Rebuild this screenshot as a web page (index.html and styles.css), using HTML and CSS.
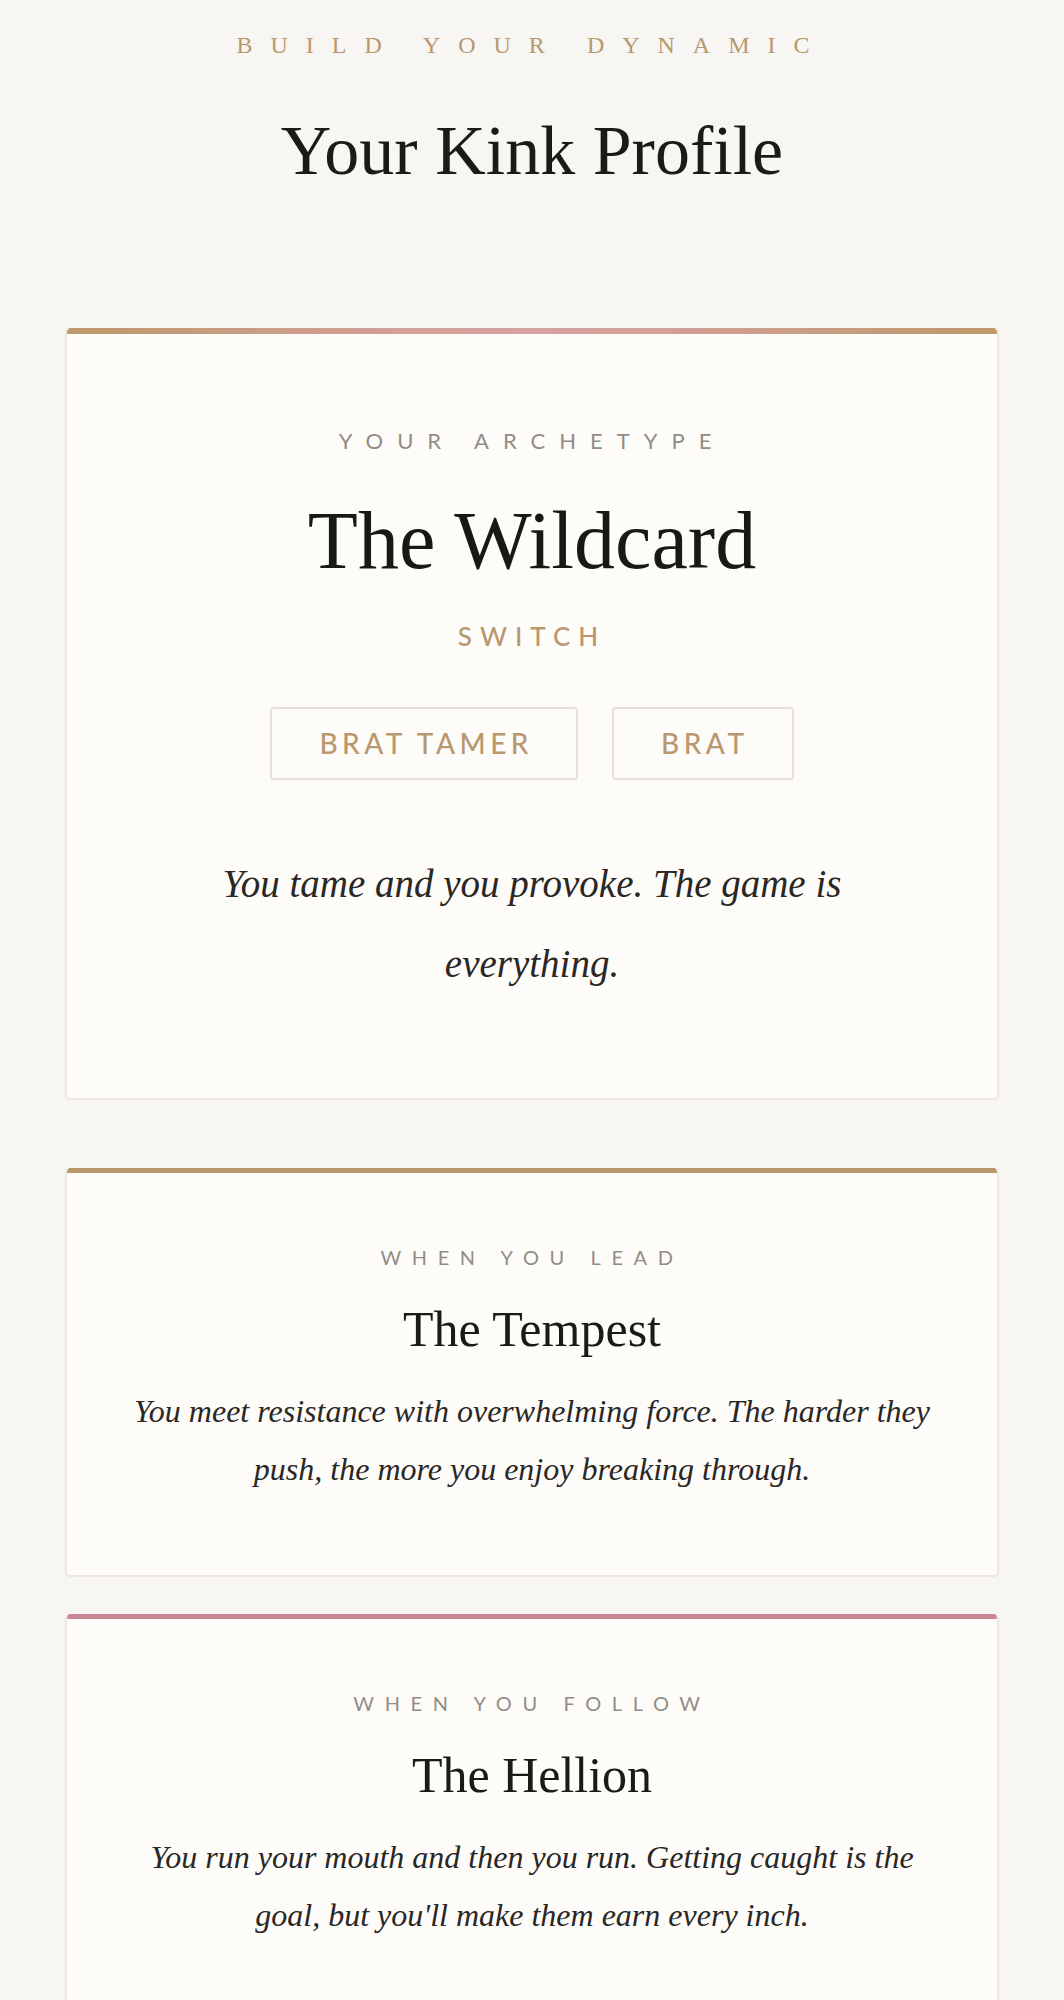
FILE: index.html
```html
<!DOCTYPE html>
<html lang="en">
<head>
<meta charset="utf-8">
<title>Your Kink Profile</title>
<link rel="stylesheet" href="styles.css">
</head>
<body>
<main class="page">
  <header class="page-head">
    <p class="eyebrow">Build your dynamic</p>
    <h1 class="page-title">Your Kink Profile</h1>
  </header>

  <section class="card card-archetype">
    <div class="bar bar-gradient"></div>
    <div class="card-body archetype-body">
      <p class="label label-lg">Your archetype</p>
      <h2 class="archetype-name">The Wildcard</h2>
      <p class="role">Switch</p>
      <div class="pills">
        <span class="pill">Brat Tamer</span>
        <span class="pill">Brat</span>
      </div>
      <p class="archetype-desc">You tame and you provoke. The game is everything.</p>
    </div>
  </section>

  <div class="sides">
    <section class="card">
      <div class="bar bar-gold"></div>
      <div class="card-body side-body">
        <p class="label">When you lead</p>
        <h3 class="side-name">The Tempest</h3>
        <p class="side-desc">You meet resistance with overwhelming force. The harder they push, the more you enjoy breaking through.</p>
      </div>
    </section>

    <section class="card">
      <div class="bar bar-rose"></div>
      <div class="card-body side-body">
        <p class="label">When you follow</p>
        <h3 class="side-name">The Hellion</h3>
        <p class="side-desc">You run your mouth and then you run. Getting caught is the goal, but you'll make them earn every inch.</p>
      </div>
    </section>
  </div>
</main>
</body>
</html>
```

FILE: styles.css
```css
* { box-sizing: border-box; }

html, body {
  margin: 0;
  padding: 0;
  background: #f8f6f2;
}

body {
  font-family: "Liberation Serif", "Times New Roman", serif;
  color: #1d1b19;
}

p, h1, h2, h3 { margin: 0; font-weight: 400; }

.page {
  padding: 30px 65px 0;
}

.page-head {
  text-align: center;
}

.eyebrow {
  font-family: "Liberation Serif", serif;
  font-size: 24px;
  line-height: 30px;
  letter-spacing: 18px;
  text-transform: uppercase;
  color: #b9976f;
}

.page-title {
  margin-top: 49px;
  font-size: 70px;
  line-height: 84px;
  color: #1c1a18;
}

.card {
  background: #fdfcf9;
  border: 2px solid #ece7df;
  border-top: 0;
  border-radius: 5px;
  overflow: hidden;
}

.card-archetype {
  margin-top: 135px;
}

.bar { height: 6px; }
.bar-gradient {
  background: linear-gradient(90deg, #bd9869 0%, #cf9f92 30%, #d6a2a2 50%, #cf9f92 70%, #bd9869 100%);
}
.bar-gold { height: 5px; background: #bb976c; }
.bar-rose { height: 5px; background: #c98892; }

.card-body {
  text-align: center;
  display: flex;
  flex-direction: column;
  align-items: center;
}

.archetype-body {
  padding: 94px 56px 94px;
}

.label {
  font-family: Lato, "Liberation Sans", sans-serif;
  font-size: 20px;
  line-height: 24px;
  letter-spacing: 10.6px;
  text-transform: uppercase;
  color: #938c85;
}

.label-lg {
  font-size: 22px;
  line-height: 26px;
  letter-spacing: 14px;
}

.archetype-name {
  margin-top: 42px;
  font-size: 82px;
  line-height: 90px;
  color: #1a1816;
}

.role {
  margin-top: 34px;
  font-family: Lato, "Liberation Sans", sans-serif;
  font-size: 26px;
  line-height: 32px;
  font-weight: 500;
  letter-spacing: 8px;
  text-transform: uppercase;
  color: #b9976f;
}

.pills {
  margin-top: 55px;
  display: flex;
  gap: 34px;
  justify-content: center;
}

.pill {
  display: block;
  border: 2px solid #e8e0d4;
  border-radius: 4px;
  padding: 18px 43px 18px 47px;
  font-family: Lato, "Liberation Sans", sans-serif;
  font-size: 28px;
  line-height: 33px;
  font-weight: 500;
  letter-spacing: 4.5px;
  text-transform: uppercase;
  color: #b9976f;
}

.archetype-desc {
  margin-top: 64px;
  max-width: 670px;
  font-style: italic;
  font-size: 39px;
  line-height: 80px;
  color: #2a2725;
}

.sides {
  margin-top: 68px;
  display: flex;
  flex-direction: column;
  gap: 37px;
}

.side-body {
  padding: 72px 56px 77px;
}

.side-name {
  margin-top: 30px;
  font-size: 50px;
  line-height: 60px;
  color: #1c1a18;
}

.side-desc {
  margin-top: 23px;
  max-width: 818px;
  font-style: italic;
  font-size: 32px;
  line-height: 58px;
  color: #2a2725;
}
```
